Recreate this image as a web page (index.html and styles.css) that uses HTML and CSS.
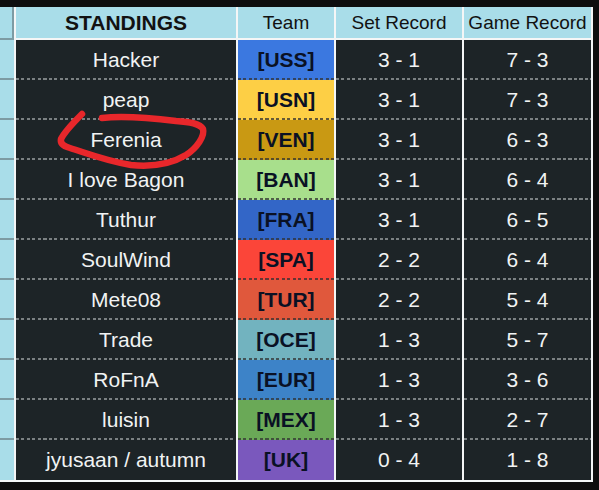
FILE: index.html
```html
<!DOCTYPE html>
<html>
<head>
<meta charset="utf-8">
<link rel="stylesheet" href="styles.css">
</head>
<body>
<div class="page">
  <div class="sheet">
    <div class="stripe head"></div>
    <div class="hcell bold">STANDINGS</div>
    <div class="hcell">Team</div>
    <div class="hcell">Set Record</div>
    <div class="hcell">Game Record</div>

    <div class="stripe"></div><div class="cell">Hacker</div><div class="team t-uss">[USS]</div><div class="cell">3 - 1</div><div class="cell">7 - 3</div>
    <div class="stripe"></div><div class="cell">peap</div><div class="team t-usn">[USN]</div><div class="cell">3 - 1</div><div class="cell">7 - 3</div>
    <div class="stripe"></div><div class="cell">Ferenia</div><div class="team t-ven">[VEN]</div><div class="cell">3 - 1</div><div class="cell">6 - 3</div>
    <div class="stripe"></div><div class="cell">I love Bagon</div><div class="team t-ban">[BAN]</div><div class="cell">3 - 1</div><div class="cell">6 - 4</div>
    <div class="stripe"></div><div class="cell">Tuthur</div><div class="team t-fra">[FRA]</div><div class="cell">3 - 1</div><div class="cell">6 - 5</div>
    <div class="stripe"></div><div class="cell">SoulWind</div><div class="team t-spa">[SPA]</div><div class="cell">2 - 2</div><div class="cell">6 - 4</div>
    <div class="stripe"></div><div class="cell">Mete08</div><div class="team t-tur">[TUR]</div><div class="cell">2 - 2</div><div class="cell">5 - 4</div>
    <div class="stripe"></div><div class="cell">Trade</div><div class="team t-oce">[OCE]</div><div class="cell">1 - 3</div><div class="cell">5 - 7</div>
    <div class="stripe"></div><div class="cell">RoFnA</div><div class="team t-eur">[EUR]</div><div class="cell">1 - 3</div><div class="cell">3 - 6</div>
    <div class="stripe"></div><div class="cell">luisin</div><div class="team t-mex">[MEX]</div><div class="cell">1 - 3</div><div class="cell">2 - 7</div>
    <div class="stripe last"></div><div class="cell last">jyusaan / autumn</div><div class="team t-uk last">[UK]</div><div class="cell last">0 - 4</div><div class="cell last">1 - 8</div>
  </div>
  <svg class="mark" width="599" height="490" viewBox="0 0 599 490">
    <path d="M82,114 C74,122 65,131 61,139 C60,143 63,146 70,148 C86,153 106,161 131,165 C151,167 171,164 186,155 C197,148 205,136 203,129 C200,124 191,122 176,121 C151,118 121,116 102,118" fill="none" stroke="#e8272b" stroke-width="6.5" stroke-linecap="round" stroke-linejoin="round"/>
  </svg>
</div>
</body>
</html>
```
FILE: styles.css
```css
html, body {
  margin: 0;
  padding: 0;
  background: #0e0e0e;
}
body {
  width: 599px;
  height: 490px;
  overflow: hidden;
  font-family: "Liberation Sans", Arial, sans-serif;
}
.page {
  position: relative;
  width: 599px;
  height: 490px;
  padding-top: 7px;
  box-sizing: border-box;
}
.sheet {
  display: grid;
  grid-template-columns: 14px 220px 96px 126px 127px;
  grid-template-rows: 33px repeat(11, 40px);
  column-gap: 2px;
  width: 591px;
  padding: 0 2px 2px 0;
  background: #f4f6f6;
}
.stripe {
  background: #a9dde9;
  border-bottom: 2px solid #7d9ba3;
}
.stripe.last {
  border-bottom: none;
}
.stripe.head {
  border-right: 2px solid #7d9ba3;
}
.hcell {
  background: #a9dde9;
  border-bottom: 2px solid #f4f6f6;
  display: flex;
  align-items: center;
  justify-content: center;
  font-size: 19px;
  color: #121212;
}
.hcell.bold {
  font-weight: bold;
  font-size: 21px;
}
.cell, .team {
  display: flex;
  align-items: center;
  justify-content: center;
  font-size: 21px;
  background-repeat: no-repeat;
  background-position: left bottom;
  background-size: 100% 2px;
}
.cell {
  background-color: #1d2427;
  color: #f1f3f3;
  background-image: repeating-linear-gradient(90deg, #7b8183 0 3px, transparent 3px 5.5px);
}
.team {
  font-weight: bold;
  color: #0a1124;
  background-image: repeating-linear-gradient(90deg, rgba(50, 50, 50, 0.75) 0 3px, transparent 3px 5.5px);
}
.cell.last, .team.last {
  background-image: none;
}
.t-uss { background-color: #3b78e0; }
.t-usn { background-color: #fdcf45; }
.t-ven { background-color: #c99913; }
.t-ban { background-color: #a8df8c; }
.t-fra { background-color: #3366c7; }
.t-spa { background-color: #fb4539; }
.t-tur { background-color: #e0583c; }
.t-oce { background-color: #72b3bf; }
.t-eur { background-color: #3d83c8; }
.t-mex { background-color: #6aa957; }
.t-uk { background-color: #7a58bd; }
.mark {
  position: absolute;
  left: 0;
  top: 0;
  pointer-events: none;
}
```
